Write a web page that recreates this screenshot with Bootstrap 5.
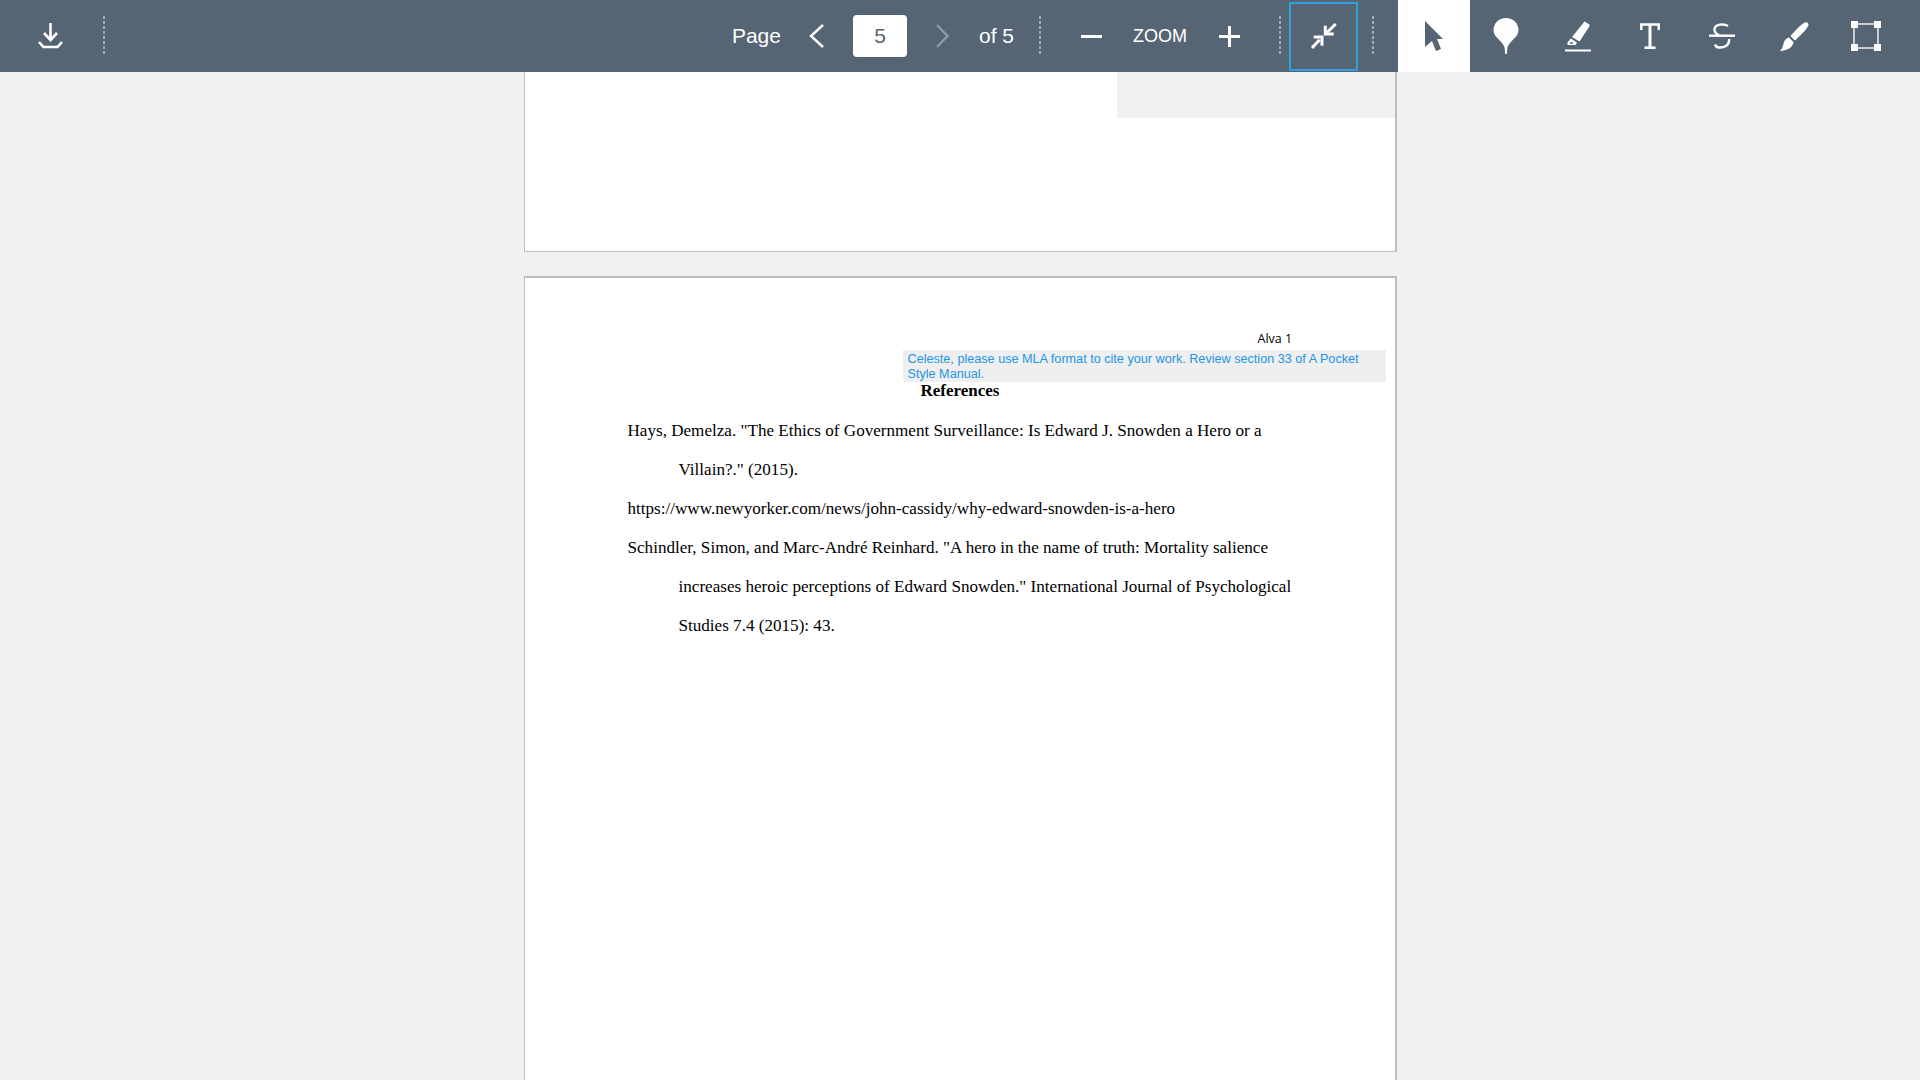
<!DOCTYPE html>
<html lang="en">
  <head>
    <meta charset="UTF-8" />
    <title>Document viewer</title>
    <link
      href="https://cdn.jsdelivr.net/npm/bootstrap@5.3.3/dist/css/bootstrap.min.css"
      rel="stylesheet"
    />
    <style>
      html,
      body {
        height: 100%;
        overflow: hidden;
      }

      body {
        background: #f1f1f1;
        font-family: "Liberation Sans", Arial, sans-serif;
      }

      .viewer-bar {
        height: 72px;
        background: #566573;
        color: #fff;
        padding: 0 18px 0 14px;
      }

      .bar-btn {
        width: 72px;
        height: 72px;
        flex: none;
      }

      .bar-btn.is-active {
        background: #fff;
      }

      .bar-btn.is-focus {
        width: 69px;
        height: 69px;
        border: 2px solid #2f9fe0;
      }

      .bar-sep {
        width: 2px;
        height: 40px;
        background: repeating-linear-gradient(#a3acb4 0 3px, transparent 3px 5px);
        flex: none;
      }

      .bar-text {
        font-size: 21px;
        line-height: 1;
      }

      .bar-label {
        padding-bottom: 2px;
      }

      .bar-zoom {
        font-size: 18px;
      }

      .page-input {
        width: 54px;
        height: 42px;
        padding: 0;
        border: 0;
        border-radius: 4px;
        font-size: 21px;
        color: #566573;
        text-align: center;
      }

      .gl-8 { margin-left: 8px; }
      .gl-14 { margin-left: 14px; }
      .gl-17 { margin-left: 17px; }
      .gl-24 { margin-left: 24px; }
      .gl-25 { margin-left: 25px; }
      .gl-28 { margin-left: 28px; }
      .gl-29 { margin-left: 29px; }
      .gl-30 { margin-left: 30px; }
      .gl-31 { margin-left: 31px; }
      .gl-32 { margin-left: 32px; }
      .gl-39 { margin-left: 39px; }
      .gl-40 { margin-left: 40px; }

      .doc-page {
        width: 873px;
        background: #fff;
        border: 1px solid #b9bec3;
        border-right-width: 2px;
        position: relative;
      }

      .doc-top {
        height: 180px;
        border-top: 0;
      }

      .doc-gap {
        margin-top: 24px;
        border-top-width: 2px;
        padding: 52px 84px 0 103px;
        height: 900px;
      }

      .blank-note {
        position: absolute;
        top: 0;
        right: 0;
        width: 278px;
        height: 46px;
        background: #f1f1f1;
      }

      .page-head {
        font-family: "Open Sans", sans-serif;
        font-size: 12.5px;
        line-height: 18px;
        color: #000;
        margin-left: 630px;
        white-space: nowrap;
      }

      .note-box {
        position: absolute;
        left: 378px;
        top: 72px;
        width: 483px;
        height: 32px;
        padding: 2px 4px 0 5px;
        background: #efefef;
        color: #2196e8;
        font-size: 12.65px;
        line-height: 15px;
      }

      .ref-title {
        font-family: "Liberation Serif", "Times New Roman", serif;
        font-size: 17px;
        font-weight: 700;
        line-height: 20px;
        text-align: center;
        margin: 33px 0 10px -18px;
        color: #000;
      }

      .ref-line {
        font-family: "Liberation Serif", "Times New Roman", serif;
        font-size: 17.1px;
        line-height: 39.1px;
        color: #000;
        white-space: nowrap;
      }

      .ref-line.hang {
        padding-left: 51px;
      }
    </style>
  </head>
  <body class="d-flex flex-column">
    <header class="viewer-bar d-flex align-items-center">
      <div class="bar-btn d-flex align-items-center justify-content-center">
        <svg width="25" height="26" viewBox="0 0 25 26" fill="none" stroke="#fff" stroke-width="2.6">
          <path d="M12.5 0V17" />
          <path d="M6 10l6.5 7 6.5-7" />
          <path d="M1 19l4.5 5h14l4.5-5" />
        </svg>
      </div>
      <div class="bar-sep gl-17"></div>

      <div class="bar-text ms-auto d-flex align-items-center">
        <span class="bar-label">Page</span>
        <svg class="gl-28" width="15" height="24" viewBox="0 0 15 24" fill="none" stroke="#fff" stroke-width="2.4">
          <path d="M14 1L2 12l12 11" />
        </svg>
        <input class="form-control page-input gl-29" type="text" value="5" />
        <svg class="gl-29" width="13" height="24" viewBox="0 0 13 24" fill="none" stroke="#8f99a3" stroke-width="2.4">
          <path d="M1 1l10.500 11L1 23" />
        </svg>
        <span class="bar-label gl-30">of 5</span>
      </div>
      <div class="bar-sep gl-25"></div>
      <div class="d-flex align-items-center">
        <svg class="gl-40" width="21" height="3" viewBox="0 0 21 3"><rect width="21" height="3" fill="#fff" /></svg>
        <span class="bar-text bar-zoom gl-31">ZOOM</span>
        <svg class="gl-32" width="21" height="21" viewBox="0 0 21 21" fill="#fff">
          <rect y="9" width="21" height="3" />
          <rect x="9" width="3" height="21" />
        </svg>
      </div>
      <div class="bar-sep gl-39"></div>
      <div class="bar-btn is-focus gl-8 d-flex align-items-center justify-content-center">
        <svg width="26" height="26" viewBox="0 0 26 26" fill="none" stroke="#fff" stroke-width="3">
          <path d="M24.700 1L16 9.500" />
          <path d="M14.300 2.700V11H22.700" />
          <path d="M1 25L8.700 16.700" />
          <path d="M2.700 14H11V22.700" />
        </svg>
      </div>
      <div class="bar-sep gl-14"></div>

      <div class="d-flex gl-24">
        <div class="bar-btn is-active d-flex align-items-center justify-content-center">
          <svg width="20" height="32" viewBox="0 0 20 32" fill="#566573">
            <path d="M1 1L19 19H13L17 29L12 31L8 21L1 27Z" />
          </svg>
        </div>
        <div class="bar-btn d-flex align-items-center justify-content-center">
          <svg width="26" height="36" viewBox="0 0 26 36" fill="#fff">
            <path d="M13 0C5.800 0 0.500 5.400 0.500 12.300C0.500 19 8.500 22 11.600 29.500L12.200 36H13.800L14.400 29.500C17.500 22 25.500 19 25.500 12.300C25.500 5.400 20.200 0 13 0Z" />
          </svg>
        </div>
        <div class="bar-btn d-flex align-items-center justify-content-center">
          <svg width="26" height="32" viewBox="0 0 26 32" fill="#fff">
            <path d="M19.500 1.500L24 4.200C24.800 5 24.800 5.800 24.300 6.600L14.500 21.500L7 17Z" />
            <path fill-rule="evenodd" d="M5.800 18.500L12 22.500L10.500 25H2.500V22.500ZM4.800 22.200H8V23.800H4.800Z" />
            <rect y="29.500" width="26" height="2" />
          </svg>
        </div>
        <div class="bar-btn d-flex align-items-center justify-content-center">
          <svg width="20" height="26" viewBox="0 0 20 26" fill="none" stroke="#fff">
            <path d="M1.300 7V1.500H18.700V7" stroke-width="2.400" />
            <path d="M10 2V24" stroke-width="3" />
            <path d="M4.500 24.700H15.500" stroke-width="2.600" />
          </svg>
        </div>
        <div class="bar-btn d-flex align-items-center justify-content-center">
          <svg width="26" height="26" viewBox="0 0 26 26" fill="none" stroke="#fff" stroke-width="2.400">
            <path d="M19 3C15 0.500 6 1 5.500 6C5.300 9 7 11 10 12" />
            <path d="M20 16C21 22 15 25 10 24.500C8 24.300 6.500 23 6 21.500" />
            <path d="M0 12.700H26" />
          </svg>
        </div>
        <div class="bar-btn d-flex align-items-center justify-content-center">
          <svg width="29" height="29" viewBox="0 0 29 29" fill="#fff">
            <path d="M25 0.500C27 -0.200 29 1.600 28.400 3.600C26 8.500 20 14 15 18.500L10.500 14C15 9 20 3 25 0.500Z" />
            <path d="M9 15.500L13.500 20C13 25 8 28.500 0 29C3 26 3 23 4 20C5 17.500 7 16 9 15.500Z" />
          </svg>
        </div>
        <div class="bar-btn d-flex align-items-center justify-content-center">
          <svg width="30" height="30" viewBox="0 0 30 30" fill="#fff">
            <rect x="3" y="3" width="24" height="24" fill="none" stroke="#e3e6e9" stroke-width="1.600" />
            <rect width="7" height="7" />
            <rect x="23" width="7" height="7" />
            <rect y="23" width="7" height="7" />
            <rect x="23" y="23" width="7" height="7" />
          </svg>
        </div>
      </div>
    </header>

    <main class="d-flex flex-column align-items-center">
      <section class="doc-page doc-top">
        <div class="blank-note"></div>
      </section>
      <section class="doc-page doc-gap">
        <div class="page-head">Alva 1</div>
        <div class="note-box">Celeste, please use MLA format to cite your work. Review section 33 of A Pocket Style Manual.</div>
        <div class="ref-title">References</div>
        <div class="ref-line">Hays, Demelza. "The Ethics of Government Surveillance: Is Edward J. Snowden a Hero or a</div>
        <div class="ref-line hang">Villain?." (2015).</div>
        <div class="ref-line">https://www.newyorker.com/news/john-cassidy/why-edward-snowden-is-a-hero</div>
        <div class="ref-line">Schindler, Simon, and Marc-André Reinhard. "A hero in the name of truth: Mortality salience</div>
        <div class="ref-line hang">increases heroic perceptions of Edward Snowden." International Journal of Psychological</div>
        <div class="ref-line hang">Studies 7.4 (2015): 43.</div>
      </section>
    </main>

    <script src="https://cdn.jsdelivr.net/npm/bootstrap@5.3.3/dist/js/bootstrap.bundle.min.js"></script>
  </body>
</html>
